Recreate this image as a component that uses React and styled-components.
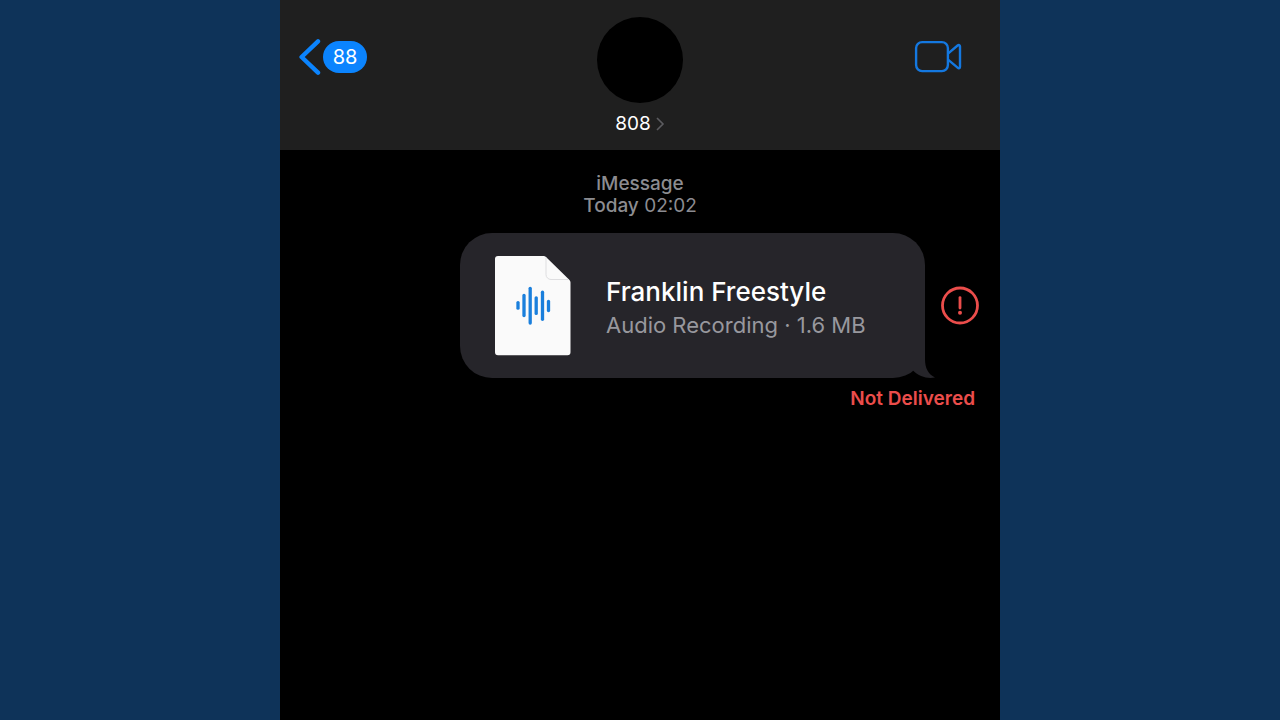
import React from "react";
import styled, { createGlobalStyle } from "styled-components";

const colors = {
  backdrop: "#0e3359",
  header: "#1f1f1f",
  bubble: "#26252a",
  blue: "#0b84fe",
  videoBlue: "#1478e0",
  red: "#eb4d4b",
  grey: "#8c8c91",
};

const GlobalStyle = createGlobalStyle`
  * {
    box-sizing: border-box;
  }

  body {
    margin: 0;
    background: ${colors.backdrop};
    font-family: Inter, "Liberation Sans", sans-serif;
  }

  button {
    padding: 0;
    border: 0;
    background: none;
    font: inherit;
    color: inherit;
    cursor: pointer;
  }

  svg {
    display: block;
  }
`;

const Screen = styled.main`
  width: 100%;
  max-width: 720px;
  min-height: 100vh;
  margin: 0 auto;
  background: #000;
`;

const Header = styled.header`
  display: grid;
  grid-template-columns: 1fr auto 1fr;
  padding: 17px 38px 14px 18px;
  background: ${colors.header};
`;

const BackButton = styled.button`
  display: flex;
  align-items: center;
  justify-self: start;
  align-self: start;
  gap: 2px;
  margin-top: 21px;
`;

const UnreadBadge = styled.span`
  min-width: 44px;
  padding: 0 9px;
  border-radius: 16px;
  background: ${colors.blue};
  color: #fff;
  font-size: 20px;
  line-height: 32px;
`;

const Contact = styled.button`
  display: flex;
  flex-direction: column;
  align-items: center;
  gap: 9px;
  margin-left: 20px;
`;

const Avatar = styled.span`
  width: 86px;
  height: 86px;
  border-radius: 50%;
  background: #000;
`;

const ContactName = styled.span`
  display: flex;
  align-items: center;
  gap: 4px;
  color: #fff;
  font-size: 19px;
  line-height: 24px;
`;

const VideoButton = styled.button`
  justify-self: end;
  align-self: start;
  margin-top: 23px;
`;

const Thread = styled.section`
  padding: 23px 20px 24px;
`;

const Timestamp = styled.p`
  margin: 0 0 16px;
  color: ${colors.grey};
  font-size: 19px;
  line-height: 22px;
  text-align: center;
`;

const Strong = styled.span`
  font-weight: 500;
`;

const MessageRow = styled.div`
  display: flex;
  align-items: center;
  justify-content: flex-end;
  gap: 15px;
`;

const Bubble = styled.a`
  position: relative;
  display: flex;
  align-items: center;
  gap: 35px;
  width: 465px;
  padding: 22px 34px;
  border-radius: 32px;
  background: ${colors.bubble};
  text-decoration: none;
`;

const Tail = styled.svg`
  position: absolute;
  right: -10px;
  bottom: 0;
`;

const FileDetails = styled.div`
  padding-top: 4px;
`;

const FileTitle = styled.div`
  color: #fff;
  font-size: 26px;
  font-weight: 500;
  line-height: 34px;
  white-space: nowrap;
`;

const FileMeta = styled.div`
  color: #98989e;
  font-size: 22px;
  line-height: 32px;
  white-space: nowrap;
`;

const Status = styled.p`
  margin: 9px 5px 0;
  color: ${colors.red};
  font-size: 19px;
  font-weight: 600;
  line-height: 24px;
  text-align: right;
`;

const BackIcon = () => (
  <svg width="23" height="38" viewBox="0 0 23 38" fill="none" aria-hidden="true">
    <path
      d="M20 3.3 3.6 19 20 34.7"
      stroke={colors.blue}
      strokeWidth="4.4"
      strokeLinecap="round"
      strokeLinejoin="round"
    />
  </svg>
);

const DetailIcon = () => (
  <svg width="10" height="16" viewBox="0 0 10 16" fill="none" aria-hidden="true">
    <path d="m2 2 6 6-6 6" stroke="#5c5c60" strokeWidth="1.6" />
  </svg>
);

const VideoIcon = () => (
  <svg width="48" height="34" viewBox="0 0 48 34" fill="none" aria-hidden="true">
    <g stroke={colors.videoBlue} strokeWidth="2.4" strokeLinejoin="round">
      <rect x="2.1" y="2.1" width="31.8" height="29" rx="6" />
      <path d="m34 13.6 9.6-8.1c1.2-1 2.4-.6 2.4 1v20.2c0 1.6-1.2 2-2.4 1L34 19.6" />
    </g>
  </svg>
);

// [x, top, bottom] of each bar in the wave form
const bars = [
  [24, 47.6, 53.2],
  [30, 40.4, 60.6],
  [36.2, 33.3, 68],
  [42.2, 42.8, 58.4],
  [48.5, 37.2, 64.3],
  [54.5, 46.4, 55.6],
];

const AudioFileIcon = () => (
  <svg width="77" height="101" viewBox="0 0 77 101" fill="none" aria-hidden="true">
    <path
      d="M4 1h45.5q1.500 0 2.500 1L75.500 25q1 1 1 2.500v69.800a3 3 0 0 1-3 3H4a3 3 0 0 1-3-3V4a3 3 0 0 1 3-3Z"
      fill="#fafafa"
    />
    <path d="M52 2.5v17a5 5 0 0 0 5 5h18" stroke="#dedee0" />
    {bars.map(([x, top, bottom]) => (
      <path
        key={x}
        d={`M${x} ${top}V${bottom}`}
        stroke="#1a7fdc"
        strokeWidth="3.3"
        strokeLinecap="round"
      />
    ))}
  </svg>
);

const AlertIcon = () => (
  <svg width="40" height="40" viewBox="0 0 40 40" fill="none" aria-hidden="true">
    <circle cx="20" cy="19.5" r="17.5" stroke={colors.red} strokeWidth="2.8" />
    <path d="M20 11.6v10.4" stroke={colors.red} strokeWidth="2.8" strokeLinecap="round" />
    <circle cx="20" cy="26.8" r="2" fill={colors.red} />
  </svg>
);

const App = () => {
  return (
    <>
      <GlobalStyle />
      <Screen>
        <Header>
          <BackButton aria-label="Back, 88 unread">
            <BackIcon />
            <UnreadBadge>88</UnreadBadge>
          </BackButton>
          <Contact>
            <Avatar />
            <ContactName>
              808
              <DetailIcon />
            </ContactName>
          </Contact>
          <VideoButton aria-label="Video call">
            <VideoIcon />
          </VideoButton>
        </Header>

        <Thread>
          <Timestamp>
            <Strong>iMessage</Strong>
            <br />
            <Strong>Today</Strong> 02:02
          </Timestamp>
          <MessageRow>
            <Bubble href="#">
              <AudioFileIcon />
              <FileDetails>
                <FileTitle>Franklin Freestyle</FileTitle>
                <FileMeta>Audio Recording · 1.6 MB</FileMeta>
              </FileDetails>
              <Tail width="24" height="34" viewBox="0 0 24 34" aria-hidden="true">
                <path
                  d="M2 0h12v15c0 9 3 15 10 18.5-8 1.5-16-1-22-7Z"
                  fill={colors.bubble}
                />
              </Tail>
            </Bubble>
            <button aria-label="Message not delivered">
              <AlertIcon />
            </button>
          </MessageRow>
          <Status>Not Delivered</Status>
        </Thread>
      </Screen>
    </>
  );
};

export default App;
